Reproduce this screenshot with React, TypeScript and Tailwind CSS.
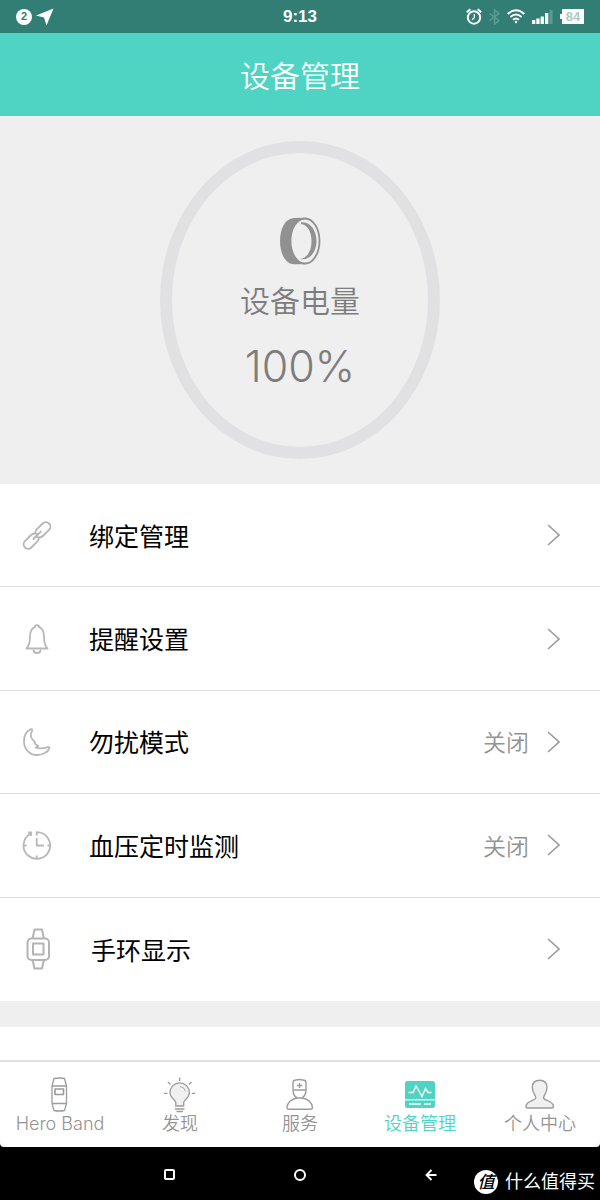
import type { ReactNode } from "react";

function LinkIcon() {
  return (
    <svg width="30" height="30" viewBox="0 0 30 30" fill="none" stroke="#b8b8b8" strokeWidth="1.9" strokeLinecap="round">
      <g transform="translate(15 15.5) rotate(-45)">
        <path d="M1 -3.5Q2.5 -4.5 4.5 -4.5H12.5a4.5 4.5 0 0 1 0 9H4.5Q0 4.5 -1.5 0" />
        <path d="M-1 3.5Q-2.5 4.5 -4.5 4.5H-12.5a4.5 4.5 0 0 1 0 -9H-4.5Q0 -4.5 1.5 0" />
        <path d="M-5 0H5.5" />
      </g>
    </svg>
  );
}

function BellIcon() {
  return (
    <svg width="30" height="30" viewBox="0 0 30 30" fill="none" stroke="#b8b8b8" strokeWidth="1.8" strokeLinecap="round" strokeLinejoin="round">
      <path d="M12.7 3.2C9.5 4.5 8 8 8 13c0 6-.8 8.5-3.5 11.5h21C22.8 21.5 22 19 22 13c0-5-1.5-8.5-4.7-9.8" />
      <path d="M12.7 3.2c.3-2.6 4.3-2.6 4.6 0" />
      <path d="M11.5 26.5c.5 3.3 6.5 3.3 7 0" />
    </svg>
  );
}

function MoonIcon() {
  return (
    <svg width="30" height="30" viewBox="0 0 30 30" fill="none" stroke="#b8b8b8" strokeWidth="1.8" strokeLinejoin="round">
      <path d="M9 2.2C4.5 4 2 9 2 14.5C2 22 7.5 28 15 28c6 0 11-3 12.400-6.600c.4-1.200-.6-1.700-1.700-1.300C22 21.500 18 21.800 13.700 20.700l2.600-2l-3-1.500l-.6-2.500C10 12.500 8.500 10 8.900 7.500C9.100 5.500 10 4.600 10.200 3.300C10.300 2.300 9.800 1.900 9 2.200Z" />
    </svg>
  );
}

function ClockIcon() {
  return (
    <svg width="30" height="30" viewBox="0 0 30 30" fill="none" stroke="#b8b8b8" strokeWidth="1.8">
      <path d="M14.7 5.5V2.2A13.3 13.3 0 1 1 8.5 3.8" />
      <path d="M14.7 8V15.5H22" />
      <path d="M1.5 15.5H4.5M25.5 15.5H28.5M14.7 28.5V25.5" />
      <path d="M6 2.500H9V6" />
    </svg>
  );
}

function WatchIcon() {
  return (
    <svg width="32" height="44" viewBox="0 0 32 44" fill="none" stroke="#b4b4b4" strokeWidth="2" strokeLinejoin="round">
      <rect x="5.500" y="11.500" width="21.500" height="21.500" rx="4" />
      <rect x="11" y="16.500" width="10.500" height="11" />
      <path d="M10.700 11L12.500 2.500H20L21.800 11M10.700 33.500L12.500 41.500H20L21.800 33.500" />
    </svg>
  );
}

function BandTabIcon() {
  return (
    <svg width="32" height="36" viewBox="0 0 32 36" fill="none" stroke="#9c9c9c" strokeWidth="1.300" strokeLinejoin="round">
      <path d="M10 1.500Q15.300 0.500 20.500 1.500L22.500 9V26.500L20.500 33.500Q15.300 34.500 10 33.500L8 26.500V9Z" />
      <path d="M8 9H22.500M8 26.500H22.500" />
      <rect x="11" y="12" width="8.500" height="5.500" strokeWidth="1.600" />
    </svg>
  );
}

function BulbTabIcon() {
  return (
    <svg width="32" height="36" viewBox="0 0 32 36" fill="none" stroke="#9c9c9c" strokeWidth="1.300">
      <path d="M11.800 29V25.500C11.800 23 6 21 6 15.500a9.700 9.700 0 0 1 19.400 0C25.400 21 19.700 23 19.700 25.500V29Z" fill="#f0f0f0" />
      <path d="M15.700 0.500V4M3.800 5L6.500 7.500M27.500 5L24.900 7.500M0 16.300H3.500M27.800 16.300H31.300M11 32H20.500M12.500 34.500H19" />
      <path d="M16 9.500Q20.500 10 21.500 14.500" strokeWidth="0.800" />
    </svg>
  );
}

function ServiceTabIcon() {
  return (
    <svg width="32" height="36" viewBox="0 0 32 36" fill="none" stroke="#9c9c9c" strokeWidth="1.400">
      <path d="M9 13.500V5.500Q9 3 12 3Q15.500 2 19 3Q22 3 22 5.500V13.500C22 18 19 20.500 17.800 21C24 21.500 28.500 26 28.500 30.500Q28.500 32.300 26 32.300H5.500Q3 32.300 3 30.500C3 26 7.500 21.500 13.500 21C12 20.500 9 18 9 13.500ZM9 13H22M13.500 21H17.800" />
      <path d="M13 8.500H18.200M15.600 5.900V11.100" strokeWidth="1.400" />
    </svg>
  );
}

function DeviceTabIcon() {
  return (
    <svg width="32" height="36" viewBox="0 0 32 36">
      <rect x="1" y="4" width="30" height="27" rx="2.500" fill="#4fd3c2" />
      <path d="M1 22.800H31" stroke="#fff" strokeWidth="1.200" />
      <path d="M4.500 15.500H9L12 9L18 19.500L21.500 11.500L24 15.500H27.500" fill="none" stroke="#fff" strokeWidth="1.400" />
      <path d="M5 27H17M20 27H27" stroke="#fff" strokeWidth="1.600" />
    </svg>
  );
}

function ProfileTabIcon() {
  return (
    <svg width="32" height="36" viewBox="0 0 32 36" fill="#f0f0f0" stroke="#9c9c9c" strokeWidth="1.400">
      <path d="M11.800 21C12 18.500 8.300 16 8.300 10.500C8.300 6 11 3.200 15.700 3.200S23 6 23 10.500C23 16 19.500 18.500 19.500 21C20 23.500 29.500 24 29.500 29.500Q29.500 31 27.500 31H4Q2 31 2 29.500C2 24 11.500 23.500 11.800 21Z" />
    </svg>
  );
}

function RingIcon() {
  return (
    <svg width="42" height="48" viewBox="0 0 42 48">
      <path d="M15 1C6 1.500 1 12 1 24S6 47 15 47.300H27V0.700Z" fill="#919191" />
      <ellipse cx="26" cy="24" rx="14.500" ry="22.500" fill="#efefef" stroke="#919191" strokeWidth="1.800" />
      <path d="M22 5.500C30.500 4 37.500 13 37.500 24S30.500 44 21 42C28 41.500 32.500 34 32.500 24S28 7.500 22 7Z" fill="#919191" />
    </svg>
  );
}

function StatusBar() {
  return (
    <div className="flex h-[33px] items-center bg-[#327e74] px-4 text-white">
      <div className="flex flex-1 items-center gap-1">
        <span className="flex size-4 items-center justify-center rounded-full bg-white text-[11px] font-bold leading-none text-[#327e74]">
          2
        </span>
        <svg width="18" height="18" viewBox="0 0 18 18" fill="#fff">
          <path d="M17.500 0.500L0 7.500L8 9.500L10.500 17.500Z" />
        </svg>
      </div>
      <span className="text-[17px] font-bold leading-5">9:13</span>
      <div className="flex flex-1 items-center justify-end gap-[7px]">
        <svg width="16" height="18" viewBox="0 0 16 18" fill="none" stroke="#fff" strokeWidth="2">
          <circle cx="8" cy="9.500" r="6.200" />
          <path d="M8.300 6V9.800L6 11.800" strokeWidth="1.200" />
          <path d="M0.800 4.200L4.300 1.200M15.200 4.200L11.700 1.200" />
        </svg>
        <svg width="11" height="16" viewBox="0 0 11 16" fill="none" stroke="#5b9c92" strokeWidth="1.500">
          <path d="M0.500 4.500L10 11.500L5.500 15.200V0.800L10 4.500L0.500 11.500" />
        </svg>
        <svg width="18" height="15" viewBox="0 0 18 15" fill="none" stroke="#fff" strokeWidth="1.900">
          <path d="M0.700 5Q9 -2.500 17.300 5M3.400 8Q9 3 14.600 8M6 10.800Q9 8.300 12 10.800" />
          <circle cx="9" cy="13" r="1.200" fill="#fff" stroke="none" />
        </svg>
        <svg width="21" height="15" viewBox="0 0 21 15" fill="#fff">
          <path d="M0 11H3.300V15H0ZM4.300 9.500H7.600V15H4.300ZM8.600 7.500H11.900V15H8.600ZM13 4H16.300V15H13Z" />
          <path d="M17.500 1H20.500V15H17.500Z" fill="#5b9c92" />
        </svg>
        <div className="flex items-center">
          <span className="h-[5px] w-[2px] bg-white" />
          <span className="flex h-[15px] w-[22px] items-center justify-center bg-white text-[13px] font-bold leading-none text-[#a9cbc6]">
            84
          </span>
        </div>
      </div>
    </div>
  );
}

interface MenuItem {
  label: string;
  icon: ReactNode;
  value?: string;
}

const menuItems: MenuItem[] = [
  { label: "绑定管理", icon: <LinkIcon /> },
  { label: "提醒设置", icon: <BellIcon /> },
  { label: "勿扰模式", icon: <MoonIcon />, value: "关闭" },
  { label: "血压定时监测", icon: <ClockIcon />, value: "关闭" },
  { label: "手环显示", icon: <WatchIcon /> },
];

function MenuRow({ label, icon, value }: MenuItem) {
  return (
    <li className="flex border-b border-[#dedede] last:border-b-0">
      <button className="flex w-full items-center pl-[22px] pr-10 text-left">
        {icon}
        <span className="ml-[37px] flex-1 pt-[3px] text-[25px] leading-8 text-black">{label}</span>
        {value && (
          <span className="mr-[18px] pt-[3px] text-[23px] font-[350] leading-8 text-[#949494]">{value}</span>
        )}
        <svg width="13" height="22" viewBox="0 0 13 22" fill="none" stroke="#9b9b9b" strokeWidth="1.600">
          <path d="M1 1L12 11L1 21" />
        </svg>
      </button>
    </li>
  );
}

const tabs = [
  { label: "Hero Band", icon: <BandTabIcon /> },
  { label: "发现", icon: <BulbTabIcon /> },
  { label: "服务", icon: <ServiceTabIcon /> },
  { label: "设备管理", icon: <DeviceTabIcon />, active: true },
  { label: "个人中心", icon: <ProfileTabIcon /> },
];

function TabBar() {
  return (
    <nav className="grid grid-cols-5 rounded-b-[4px] border-t-2 border-[#e0e0e0] bg-white pb-[13px] pt-[15px]">
      {tabs.map((tab) => (
        <button
          key={tab.label}
          className={
            tab.active
              ? "flex flex-col items-center text-[#4fd3c2]"
              : "flex flex-col items-center text-[#949494]"
          }
        >
          {tab.icon}
          <span className="whitespace-nowrap pt-px font-['Inter','Noto_Sans_CJK_SC',sans-serif] text-[18px] font-[350] leading-5">
            {tab.label}
          </span>
        </button>
      ))}
    </nav>
  );
}

function SystemNav() {
  return (
    <div className="relative flex h-[53px] items-center justify-center gap-[107px] bg-black pt-[2px]">
      <button aria-label="Recent apps" className="flex w-6 justify-center">
        <span className="size-[11px] rounded-[2px] border-2 border-white" />
      </button>
      <button aria-label="Home" className="flex w-6 justify-center">
        <span className="size-3 rounded-full border-2 border-white" />
      </button>
      <button aria-label="Back" className="flex w-6 justify-center">
        <svg width="12" height="12" viewBox="0 0 12 12" fill="none" stroke="#fff" strokeWidth="1.900">
          <path d="M11.500 6H1.500M6.500 1L1.500 6L6.500 11" />
        </svg>
      </button>
      <div className="absolute bottom-[6px] right-[5px] flex items-center gap-[7px] text-white">
        <span className="flex size-6 items-center justify-center rounded-full bg-white text-[17px] font-medium italic leading-none text-black">
          值
        </span>
        <span className="text-[18px] leading-6">什么值得买</span>
      </div>
    </div>
  );
}

export default function App() {
  return (
    <div className="flex min-h-screen flex-col bg-black font-['Liberation_Sans','Noto_Sans_CJK_SC',sans-serif]">
      <StatusBar />
      <header className="flex h-[83px] items-center justify-center bg-[#4fd3c2] pt-1">
        <h1 className="text-[30px] font-[350] leading-10 text-white">设备管理</h1>
      </header>
      <main className="flex flex-1 flex-col bg-[#efefef]">
        <section className="flex justify-center py-[25px]">
          <div className="flex h-[318px] w-[280px] flex-col items-center rounded-[50%] border-[12px] border-[#e1e1e3] pt-16 text-[#7d7d7d]">
            <RingIcon />
            <p className="mt-[17px] text-[30px] font-[350] leading-10">设备电量</p>
            <p className="mt-5 font-['Inter',sans-serif] text-[43px] font-light leading-[48px]">100%</p>
          </div>
        </section>
        <ul className="grid min-h-[517px] auto-rows-fr bg-white">
          {menuItems.map((item) => (
            <MenuRow key={item.label} {...item} />
          ))}
        </ul>
        <div className="mt-[26px] min-h-8 flex-1 bg-white" />
      </main>
      <TabBar />
      <SystemNav />
    </div>
  );
}
